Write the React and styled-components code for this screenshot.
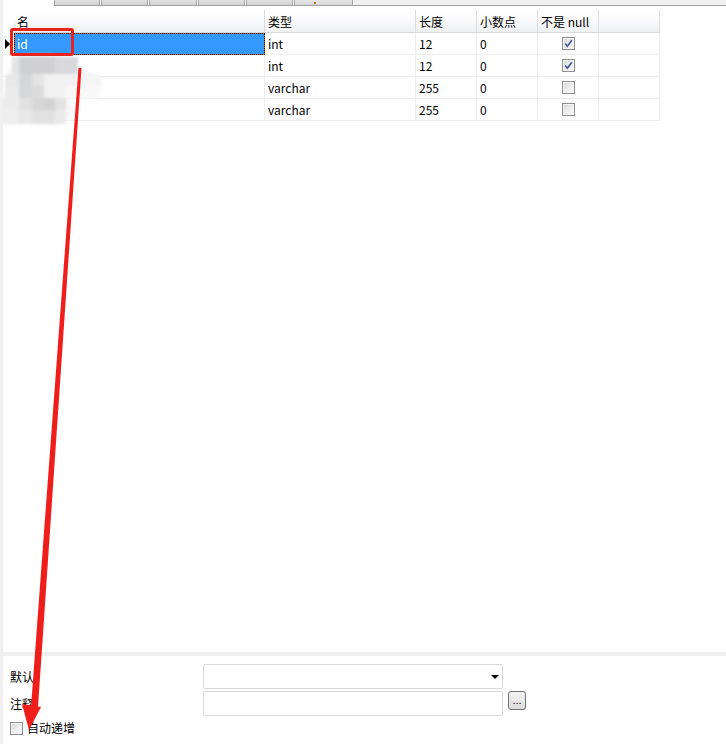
import React from "react";
import styled, { createGlobalStyle, css } from "styled-components";

const GlobalStyle = createGlobalStyle`
  html, body { margin: 0; padding: 0; background: #fff; }
  body { font-family: "Noto Sans CJK SC", "Noto Sans", sans-serif; font-size: 12px; color: #000; }
  * { box-sizing: border-box; }
`;

const Page = styled.div`
  position: relative;
  width: 726px;
  height: 744px;
  display: flex;
  overflow: hidden;
  background: #fff;
`;

const LeftStrip = styled.div`
  width: 3px;
  flex: none;
  background: #f0f0f0;
`;

const Main = styled.div`
  flex: 1;
  display: flex;
  flex-direction: column;
  min-width: 0;
`;

const TabRow = styled.div`
  display: flex;
  height: 6px;
  margin-left: 51px;
  border-bottom: 1px solid #a0a0a0;
  flex: none;
`;

const Tab = styled.div`
  width: ${(p) => p.$w}px;
  height: 5px;
  background: linear-gradient(#e2e2e2, #d2d2d2);
  border-left: 1px solid #a6a6a6;
  border-right: 1px solid #a6a6a6;
  margin-right: 1px;
  position: relative;
  ${(p) =>
    p.$active &&
    css`
      background: linear-gradient(#e6e6e6, #d8d8d8);
    `}
`;

const TabGlyph = styled.span`
  position: absolute;
  left: 19px;
  bottom: 1px;
  width: 2px;
  height: 2px;
  background: #c86d1a;
`;

const TabFill = styled.div`
  flex: 1;
  height: 5px;
  background: #f0f0f0;
`;

const GridArea = styled.div`
  flex: 1;
  padding-top: 4px;
`;

const Grid = styled.div`
  display: grid;
  grid-template-columns: 11px 251px 151px 61px 61px 61px 61px;
  grid-template-rows: 23px;
  grid-auto-rows: 22px;
  width: 657px;
`;

const HeadCell = styled.div`
  display: flex;
  align-items: center;
  padding-left: 3px;
  white-space: nowrap;
  ${(p) =>
    p.$blank
      ? css`
          background: #fff;
        `
      : css`
          background: linear-gradient(#ffffff 0%, #fbfbfc 40%, #eef0f2 100%);
          border-right: 1px solid #dcdcdc;
          border-bottom: 1px solid #d8d8d8;
        `}
`;

const Cell = styled.div`
  display: flex;
  align-items: center;
  justify-content: ${(p) => (p.$center ? "center" : "flex-start")};
  padding-left: ${(p) => (p.$center ? 0 : 3)}px;
  padding-bottom: 1px;
  border-right: 1px solid #ededed;
  border-bottom: 1px solid #ededed;
  white-space: nowrap;
  overflow: hidden;
`;

const IndicatorCell = styled.div`
  display: flex;
  align-items: center;
  padding-left: 2px;
  border-right: 1px solid #ededed;
  border-bottom: 1px solid #ededed;
`;

const RowPointer = styled.span`
  width: 0;
  height: 0;
  border-left: 5px solid #000;
  border-top: 5px solid transparent;
  border-bottom: 5px solid transparent;
`;

const SelectedCell = styled.div`
  display: flex;
  align-items: center;
  padding-left: 2px;
  padding-bottom: 1px;
  color: #fff;
  border: 1px dotted #000;
  background: linear-gradient(#3399ff, #3399ff) padding-box, #cc6600 border-box;
  white-space: nowrap;
`;

const CheckBox = styled.span`
  width: 13px;
  height: 13px;
  flex: none;
  border: 1px solid #8e8f8f;
  background: linear-gradient(135deg, #d4d4d6 0%, #eeeeee 55%, #fdfdfd 100%);
  box-shadow: inset 0 0 0 1px #f4f4f4;
  display: flex;
  align-items: center;
  justify-content: center;
`;

const Divider = styled.div`
  height: 4px;
  flex: none;
  background: #efefef;
`;

const FormArea = styled.div`
  height: 88px;
  flex: none;
  padding: 8px 0 0 7px;
`;

const FormGrid = styled.div`
  display: grid;
  grid-template-columns: 193px 300px auto;
  grid-template-rows: 25px 25px;
  row-gap: 2px;
  align-items: center;
`;

const Label = styled.div`
  line-height: 14px;
  padding-top: 1px;
`;

const Field = styled.div`
  height: 25px;
  border: 1px solid #d7d8da;
  border-radius: 2px;
  background: #fff;
  display: flex;
  align-items: center;
  justify-content: flex-end;
  padding-right: 3px;
`;

const DropArrow = styled.span`
  width: 0;
  height: 0;
  border-top: 4px solid #000;
  border-left: 4px solid transparent;
  border-right: 4px solid transparent;
`;

const MoreButton = styled.button`
  align-self: start;
  margin-left: 5px;
  width: 18px;
  height: 19px;
  padding: 0 0 3px;
  border: 1px solid #707070;
  border-radius: 3px;
  background: linear-gradient(#f4f4f4, #dcdcdc);
  font-family: "Liberation Sans", sans-serif;
  font-size: 11px;
  line-height: 1;
  display: flex;
  align-items: flex-end;
  justify-content: center;
  color: #000;
`;

const CheckRow = styled.div`
  display: flex;
  align-items: center;
  gap: 4px;
  margin-top: 5px;
  height: 14px;
  line-height: 14px;
`;

const Overlay = styled.svg`
  position: absolute;
  left: 0;
  top: 0;
  pointer-events: none;
`;

const Annotation = styled.div`
  position: absolute;
  left: 10px;
  top: 28px;
  width: 64px;
  height: 28px;
  border: 3px solid #e8231c;
  border-radius: 3px;
  pointer-events: none;
`;

const Check = ({ checked }) => (
  <CheckBox>
    {checked && (
      <svg width="9" height="9" viewBox="0 0 9 9">
        <path d="M1.2 4.6 L3.4 7.2 L7.8 1.2" fill="none" stroke="#3f5796" strokeWidth="1.6" />
      </svg>
    )}
  </CheckBox>
);

const columns = ["名", "类型", "长度", "小数点", "不是 null", ""];

const rows = [
  { name: "id", type: "int", len: "12", dec: "0", nn: true, selected: true },
  { name: "", type: "int", len: "12", dec: "0", nn: true },
  { name: "", type: "varchar", len: "255", dec: "0", nn: false },
  { name: "", type: "varchar", len: "255", dec: "0", nn: false },
];

const tabs = [46, 47, 48, 47, 47, 59];

const cloud = [
  [40, 70, 30, 14],
  [75, 84, 26, 13],
  [24, 100, 24, 16],
  [50, 108, 22, 14],
  [12, 112, 12, 12],
];

const blobBlocks = [
  [12, 57, 7, 17, "#e4e4e7"],
  [19, 57, 13, 17, "#cfd0d4"],
  [32, 57, 23, 17, "#d0d0d3"],
  [55, 57, 23, 17, "#d9d9dc"],
  [5, 74, 14, 12, "#e8e8e8"],
  [19, 74, 13, 12, "#d5d6d9"],
  [32, 74, 12, 12, "#e3e3e3"],
  [44, 74, 34, 12, "#f1f1f1"],
  [78, 74, 22, 12, "#f5f5f5"],
  [5, 86, 14, 12, "#ebebeb"],
  [19, 86, 13, 12, "#d6d7d9"],
  [32, 86, 12, 12, "#dbdbdb"],
  [44, 86, 22, 12, "#f2f2f2"],
  [66, 86, 34, 12, "#f8f8f8"],
  [2, 98, 17, 12, "#ececec"],
  [19, 98, 13, 12, "#e1e1e1"],
  [32, 98, 12, 12, "#d7d7d7"],
  [44, 98, 11, 12, "#d3d3d3"],
  [55, 98, 11, 12, "#e3e3e3"],
  [2, 110, 17, 14, "#eeeeee"],
  [19, 110, 13, 14, "#e8e8e8"],
  [32, 110, 23, 14, "#e1e1e1"],
  [55, 110, 11, 14, "#eaeaea"],
];

export default function App() {
  return (
    <>
      <GlobalStyle />
      <Page>
        <LeftStrip />
        <Main>
          <TabRow>
            {tabs.map((w, i) => (
              <Tab key={i} $w={w} $active={i === tabs.length - 1}>
                {i === tabs.length - 1 && <TabGlyph />}
              </Tab>
            ))}
            <TabFill />
          </TabRow>
          <GridArea>
            <Grid>
              <HeadCell $blank />
              {columns.map((c, i) => (
                <HeadCell key={i}>{c}</HeadCell>
              ))}
              {rows.map((r, i) => (
                <React.Fragment key={i}>
                  <IndicatorCell>{r.selected && <RowPointer />}</IndicatorCell>
                  {r.selected ? <SelectedCell>{r.name}</SelectedCell> : <Cell>{r.name}</Cell>}
                  <Cell>{r.type}</Cell>
                  <Cell>{r.len}</Cell>
                  <Cell>{r.dec}</Cell>
                  <Cell $center>
                    <Check checked={r.nn} />
                  </Cell>
                  <Cell />
                </React.Fragment>
              ))}
            </Grid>
          </GridArea>
          <Divider />
          <FormArea>
            <FormGrid>
              <Label>默认:</Label>
              <Field>
                <DropArrow />
              </Field>
              <span />
              <Label>注释:</Label>
              <Field />
              <MoreButton>...</MoreButton>
            </FormGrid>
            <CheckRow>
              <Check checked={false} />
              <span>自动递增</span>
            </CheckRow>
          </FormArea>
        </Main>

        <Overlay width="110" height="80" viewBox="0 52 110 80" style={{ top: 52 }}>
          <defs>
            <filter id="soft" x="-20%" y="-20%" width="140%" height="140%">
              <feGaussianBlur stdDeviation="1.6" />
            </filter>
            <filter id="softer" x="-30%" y="-30%" width="160%" height="160%">
              <feGaussianBlur stdDeviation="3" />
            </filter>
          </defs>
          <g filter="url(#softer)">
            {cloud.map(([cx, cy, rx, ry], i) => (
              <ellipse key={i} cx={cx} cy={cy} rx={rx} ry={ry} fill="#f4f4f4" />
            ))}
          </g>
          <g filter="url(#soft)">
            {blobBlocks.map(([x, y, w, h, c], i) => (
              <rect key={i} x={x} y={y} width={w} height={h} fill={c} />
            ))}
          </g>
        </Overlay>

        <Annotation />

        <Overlay width="726" height="744" viewBox="0 0 726 744">
          <polygon points="78.5,68 81.5,68 38,707 31,707" fill="#f01e1a" />
          <polygon points="22,704 41,707 29,730" fill="#f01e1a" />
        </Overlay>
      </Page>
    </>
  );
}
